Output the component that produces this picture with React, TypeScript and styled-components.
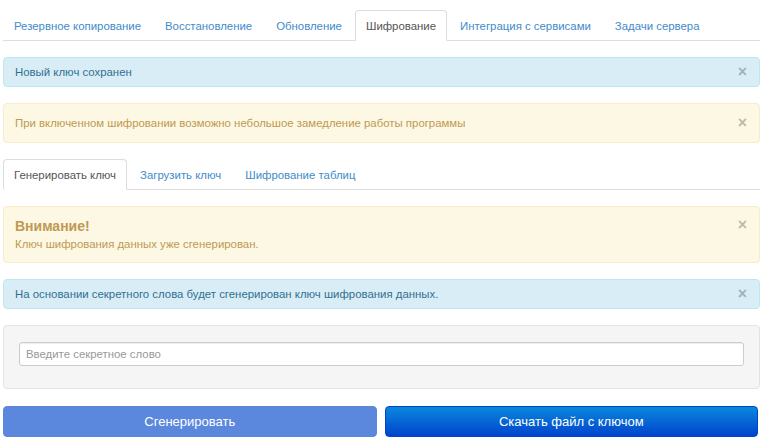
import styled, { createGlobalStyle } from 'styled-components';

const GlobalStyle = createGlobalStyle`
  html, body {
    margin: 0;
    padding: 0;
    background: #ffffff;
  }
  body {
    font-family: "Liberation Sans", Arial, sans-serif;
    font-size: 11.4px;
    line-height: 14px;
    color: #555555;
  }
  * {
    box-sizing: border-box;
  }
`;

const Page = styled.div`
  display: flex;
  flex-direction: column;
  gap: 16px;
  padding: 10px 8px 0 3px;
`;

const Tabs = styled.ul`
  display: flex;
  list-style: none;
  margin: 0;
  padding: 0;
  border-bottom: 1px solid #dddddd;
`;

const Tab = styled.li<{ $active?: boolean }>`
  margin: 0 2px -1px 0;
  padding: 8px 10px 7px;
  line-height: 14px;
  border: 1px solid ${(p) => (p.$active ? '#dddddd' : 'transparent')};
  border-bottom-color: ${(p) => (p.$active ? '#ffffff' : 'transparent')};
  border-radius: 4px 4px 0 0;
  background: ${(p) => (p.$active ? '#ffffff' : 'transparent')};
  color: ${(p) => (p.$active ? '#555555' : '#428bca')};
  cursor: pointer;
  white-space: nowrap;
`;

const Alert = styled.div<{ $kind: 'info' | 'warning'; $pad?: number }>`
  display: flex;
  align-items: flex-start;
  justify-content: space-between;
  padding: ${(p) => p.$pad ?? 7}px 11px;
  border-radius: 4px;
  border: 1px solid ${(p) => (p.$kind === 'info' ? '#bce8f1' : '#faebcc')};
  background: ${(p) => (p.$kind === 'info' ? '#d9edf7' : '#fcf8e3')};
  color: ${(p) => (p.$kind === 'info' ? '#31708f' : '#c09853')};
  line-height: 14px;
`;

const AlertBody = styled.div`
  display: flex;
  flex-direction: column;
  gap: 2px;
`;

const AlertTitle = styled.strong`
  font-size: 14px;
  line-height: 17px;
  font-weight: bold;
`;

const Close = styled.span`
  font-size: 16px;
  line-height: 14px;
  font-weight: bold;
  color: #000000;
  opacity: 0.25;
  margin-right: 1px;
  cursor: pointer;
`;

const Well = styled.div`
  padding: 16px 15px 22px;
  background: #f5f5f5;
  border: 1px solid #e3e3e3;
  border-radius: 4px;
`;

const Input = styled.input`
  display: block;
  width: 100%;
  height: 24px;
  padding: 4px 6px;
  font-family: inherit;
  font-size: 11.4px;
  color: #555555;
  background: #ffffff;
  border: 1px solid #cccccc;
  border-radius: 3px;
  box-shadow: inset 0 1px 1px rgba(0, 0, 0, 0.075);
  outline: none;
  &::placeholder {
    color: #999999;
  }
`;

const Buttons = styled.div`
  display: flex;
  gap: 8px;
  padding: 1px 2px 0 0;
`;

const Button = styled.button<{ $primary?: boolean }>`
  flex: 1;
  height: 31px;
  font-family: inherit;
  font-size: 13px;
  color: #ffffff;
  border: 1px solid ${(p) => (p.$primary ? '#0044cc' : '#5a86dc')};
  border-radius: 4px;
  background: ${(p) =>
    p.$primary
      ? 'linear-gradient(to bottom, #0a88dc, #0044cc)'
      : '#5b87dd'};
  cursor: pointer;
`;

const topTabs = [
  'Резервное копирование',
  'Восстановление',
  'Обновление',
  'Шифрование',
  'Интеграция с сервисами',
  'Задачи сервера',
];

const keyTabs = ['Генерировать ключ', 'Загрузить ключ', 'Шифрование таблиц'];

export default function App() {
  return (
    <>
      <GlobalStyle />
      <Page>
        <Tabs>
          {topTabs.map((t) => (
            <Tab key={t} $active={t === 'Шифрование'}>
              {t}
            </Tab>
          ))}
        </Tabs>

        <Alert $kind="info">
          <span>Новый ключ сохранен</span>
          <Close>×</Close>
        </Alert>

        <Alert $kind="warning" $pad={12}>
          <span>При включенном шифровании возможно небольшое замедление работы программы</span>
          <Close>×</Close>
        </Alert>

        <Tabs>
          {keyTabs.map((t, i) => (
            <Tab key={t} $active={i === 0}>
              {t}
            </Tab>
          ))}
        </Tabs>

        <Alert $kind="warning" $pad={11}>
          <AlertBody>
            <AlertTitle>Внимание!</AlertTitle>
            <span>Ключ шифрования данных уже сгенерирован.</span>
          </AlertBody>
          <Close>×</Close>
        </Alert>

        <Alert $kind="info">
          <span>На основании секретного слова будет сгенерирован ключ шифрования данных.</span>
          <Close>×</Close>
        </Alert>

        <Well>
          <Input placeholder="Введите секретное слово" />
        </Well>

        <Buttons>
          <Button>Сгенерировать</Button>
          <Button $primary>Скачать файл с ключом</Button>
        </Buttons>
      </Page>
    </>
  );
}
